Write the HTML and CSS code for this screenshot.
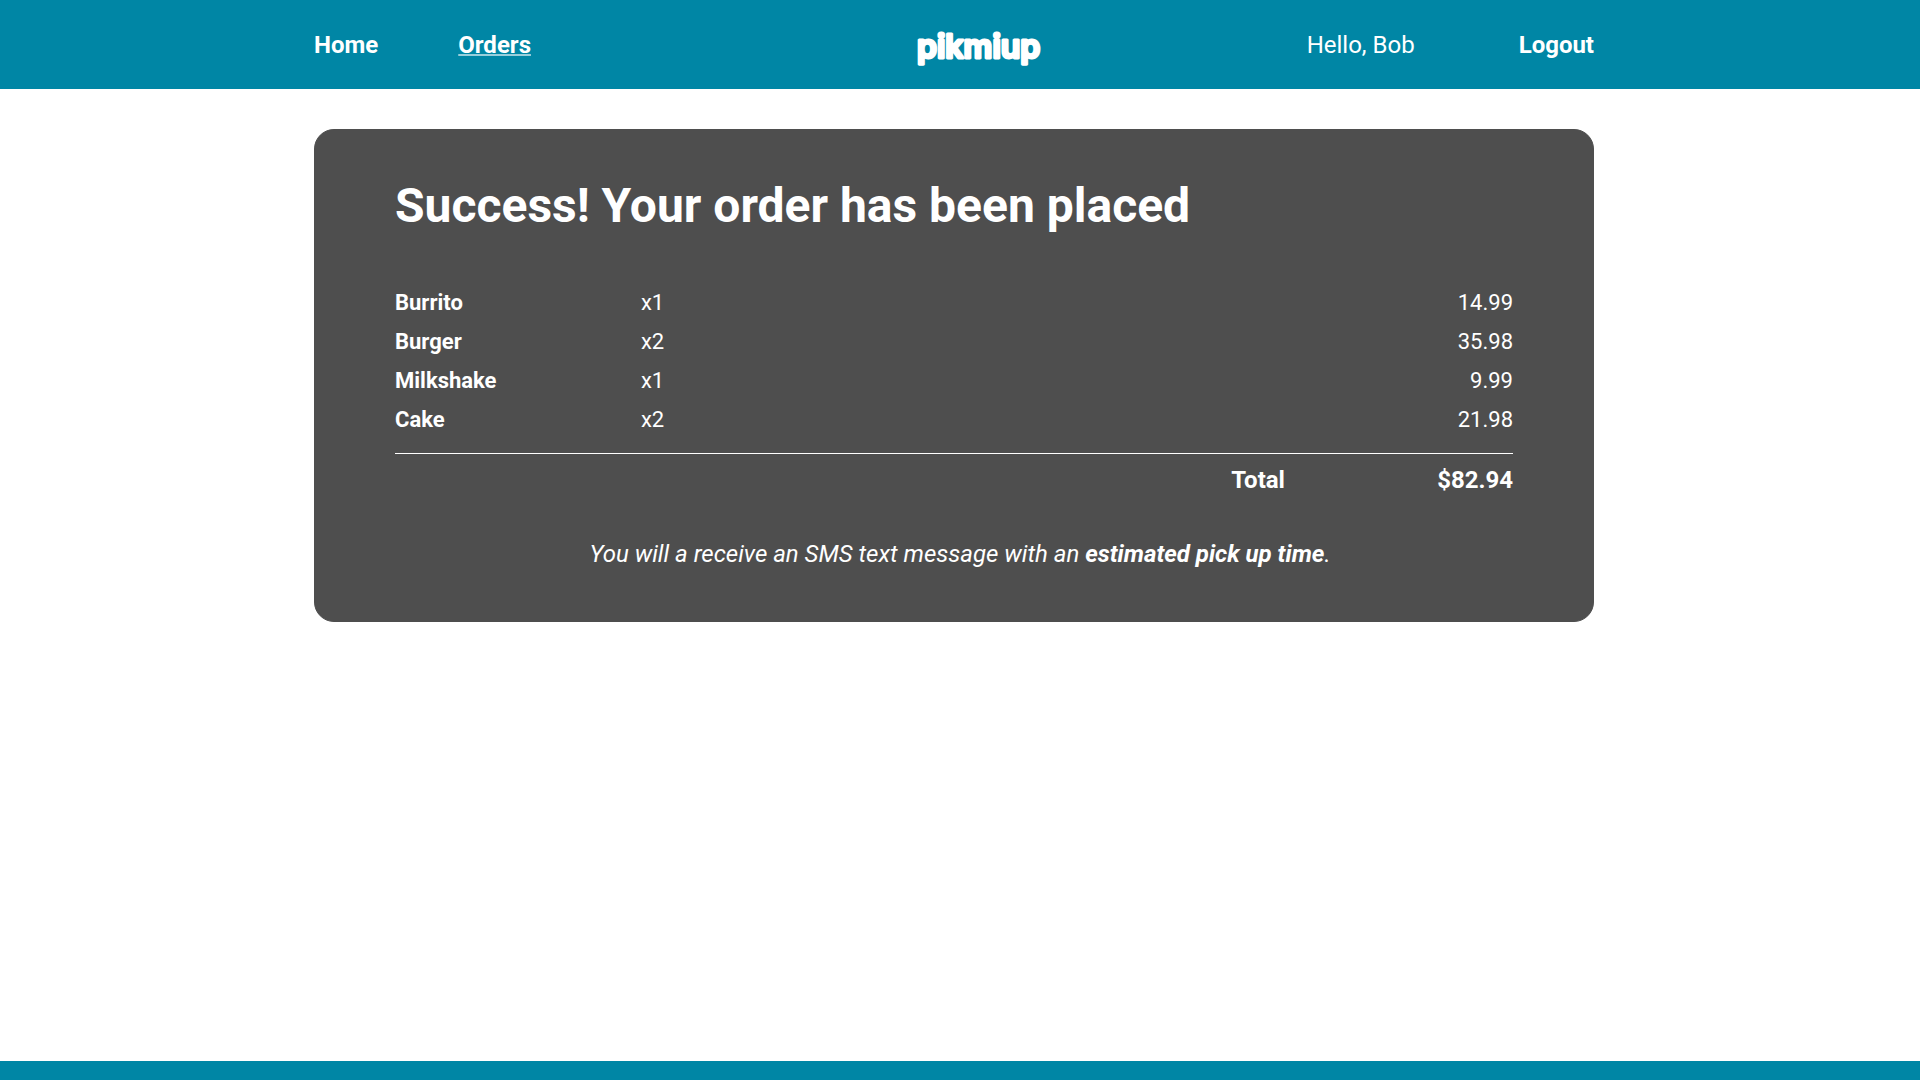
FILE: index.html
```html
<!DOCTYPE html>
<html lang="en">
<head>
  <meta charset="utf-8">
  <meta name="viewport" content="width=device-width, initial-scale=1">
  <title>pikmiup – Order placed</title>
  <link rel="stylesheet" href="styles.css">
</head>
<body>
  <header class="site-header">
    <nav class="nav">
      <div class="nav-links">
        <a class="nav-link" href="#home">Home</a>
        <a class="nav-link nav-link-current" href="#orders" aria-current="page">Orders</a>
      </div>
      <a class="logo" href="#home">
        <svg class="logo-mark" width="136" height="50" viewBox="0 0 136 50">
          <text class="logo-text" x="1" y="38">pikmiup</text>
        </svg>
      </a>
      <div class="nav-user">
        <span>Hello, Bob</span>
        <a class="nav-link" href="#logout">Logout</a>
      </div>
    </nav>
  </header>

  <main class="main">
    <section class="card">
      <h1 class="title">Success! Your order has been placed</h1>
      <table class="order">
        <colgroup>
          <col class="col-name">
          <col class="col-quantity">
          <col class="col-label">
          <col>
        </colgroup>
        <tbody class="order-items">
          <tr><th scope="row">Burrito</th><td>x1</td><td></td><td class="price">14.99</td></tr>
          <tr><th scope="row">Burger</th><td>x2</td><td></td><td class="price">35.98</td></tr>
          <tr><th scope="row">Milkshake</th><td>x1</td><td></td><td class="price">9.99</td></tr>
          <tr><th scope="row">Cake</th><td>x2</td><td></td><td class="price">21.98</td></tr>
        </tbody>
        <tfoot class="order-total">
          <tr><td colspan="2"></td><th scope="row">Total</th><td class="price">$82.94</td></tr>
        </tfoot>
      </table>
      <p class="note">You will a receive an SMS text message with an <strong>estimated pick up time</strong>.</p>
    </section>
  </main>

  <footer class="site-footer"></footer>
</body>
</html>
```

FILE: styles.css
```css
* {
  box-sizing: border-box;
}

body {
  margin: 0;
  min-height: 100vh;
  display: flex;
  flex-direction: column;
  background: #fff;
  color: #fff;
  font-family: Roboto, "Liberation Sans", sans-serif;
  font-size: 24px;
  line-height: 28px;
}

.site-header {
  padding: 0 12px 0 0;
  background: #0086a5;
}

.nav {
  display: grid;
  grid-template-columns: 47% 1fr auto;
  align-items: center;
  max-width: 1280px;
  min-height: 89px;
  margin: 0 auto;
}

.nav-links {
  display: flex;
  gap: 80px;
}

.nav-user {
  display: flex;
  gap: 104px;
}

.nav-link {
  color: #fff;
  font-weight: 700;
  text-decoration: none;
}

.nav-link-current {
  text-decoration: underline;
  text-decoration-color: rgba(255, 255, 255, 0.6);
  text-decoration-thickness: 2px;
}

.logo {
  display: flex;
}

.logo-text {
  fill: #fff;
  stroke: #fff;
  stroke-width: 3px;
  stroke-linejoin: round;
  font-family: Inter, sans-serif;
  font-size: 32px;
  font-weight: 600;
}

.main {
  flex: 1;
  padding: 40px 12px 40px 0;
}

.card {
  max-width: 1280px;
  margin: 0 auto;
  padding: 48px 80px;
  border: 1px solid #4e4e4e;
  border-radius: 20px;
  background: #4e4e4e;
}

.title {
  margin: 0 0 49px;
  font-size: 48px;
  line-height: 56px;
}

.order {
  width: 100%;
  table-layout: fixed;
  border-collapse: collapse;
}

.order th,
.order td {
  padding: 0;
  text-align: left;
}

.order .price {
  text-align: right;
}

.col-name {
  width: 22%;
}

.col-quantity {
  width: 52.8%;
}

.col-label {
  width: 10%;
}

.order-items {
  font-size: 22px;
}

.order-items tr {
  height: 39px;
}

.order-items tr:last-child {
  height: 53px;
  vertical-align: top;
}

.order-items tr:last-child > * {
  padding-top: 6px;
}

.order-total {
  border-top: 1px solid #fff;
  font-weight: 700;
}

.order-total tr {
  height: 53px;
}

.note {
  margin: 34px 0 5px;
  padding-left: 12px;
  font-style: italic;
  text-align: center;
}

.site-footer {
  min-height: 19px;
  background: #0086a5;
}
```
